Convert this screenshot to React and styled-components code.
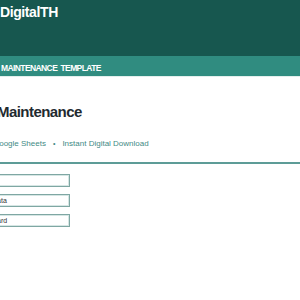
import React from 'react';
import styled, { createGlobalStyle } from 'styled-components';

const GlobalStyle = createGlobalStyle`
  html, body {
    margin: 0;
    padding: 0;
    background: #ffffff;
    overflow: hidden;
  }
  body {
    font-family: 'Liberation Sans', Arial, sans-serif;
  }
`;

const Page = styled.div`
  width: 300px;
  min-height: 300px;
  background: #ffffff;
`;

const Header = styled.header`
  height: 56px;
  box-sizing: border-box;
  padding-top: 4px;
  background: #17574f;
`;

const Brand = styled.div`
  font-weight: 700;
  font-size: 14px;
  line-height: 16px;
  letter-spacing: -0.4px;
  color: #ffffff;
`;

const Ribbon = styled.div`
  height: 21px;
  box-sizing: border-box;
  padding-top: 4px;
  background: #308c80;
  border-bottom: 1px solid #e3efed;
`;

const RibbonText = styled.div`
  font-weight: 700;
  font-size: 8.5px;
  line-height: 16px;
  letter-spacing: -0.6px;
  word-spacing: 1.5px;
  color: #ffffff;
  margin-left: 1px;
`;

const Content = styled.main`
  padding-top: 27px;
`;

const Title = styled.h1`
  margin: 0 0 0 -3px;
  font-weight: 700;
  font-size: 15px;
  line-height: 16px;
  letter-spacing: -0.55px;
  color: #1f2a30;
`;

const Meta = styled.div`
  display: flex;
  align-items: center;
  gap: 7px;
  margin: 19px 0 0 -7px;
  font-size: 8px;
  line-height: 10px;
  color: #3f8a85;
  white-space: nowrap;
`;

const Dot = styled.span`
  font-size: 7px;
`;

const Rule = styled.hr`
  margin: 13px 0 0;
  border: none;
  height: 2px;
  background: #5d9c97;
`;

const Fields = styled.div`
  display: flex;
  flex-direction: column;
  gap: 7px;
  margin-top: 10px;
`;

const Field = styled.div`
  width: 82px;
  height: 13px;
  box-sizing: border-box;
  margin-left: -12px;
  padding-left: 3px;
  border: 1px solid #7fa7a3;
  box-shadow: inset 0 0 0 1px #d6e6e4;
  background: #ffffff;
  font-size: 7px;
  line-height: 11px;
  color: #333333;
  white-space: nowrap;
  overflow: hidden;
`;

export default function App() {
  return (
    <Page>
      <GlobalStyle />
      <Header>
        <Brand>DigitalTH</Brand>
      </Header>
      <Ribbon>
        <RibbonText>MAINTENANCE TEMPLATE</RibbonText>
      </Ribbon>
      <Content>
        <Title>Maintenance</Title>
        <Meta>
          <span>Google Sheets</span>
          <Dot>•</Dot>
          <span>Instant Digital Download</span>
        </Meta>
        <Rule />
        <Fields>
          <Field />
          <Field>Data</Field>
          <Field>Card</Field>
        </Fields>
      </Content>
    </Page>
  );
}
